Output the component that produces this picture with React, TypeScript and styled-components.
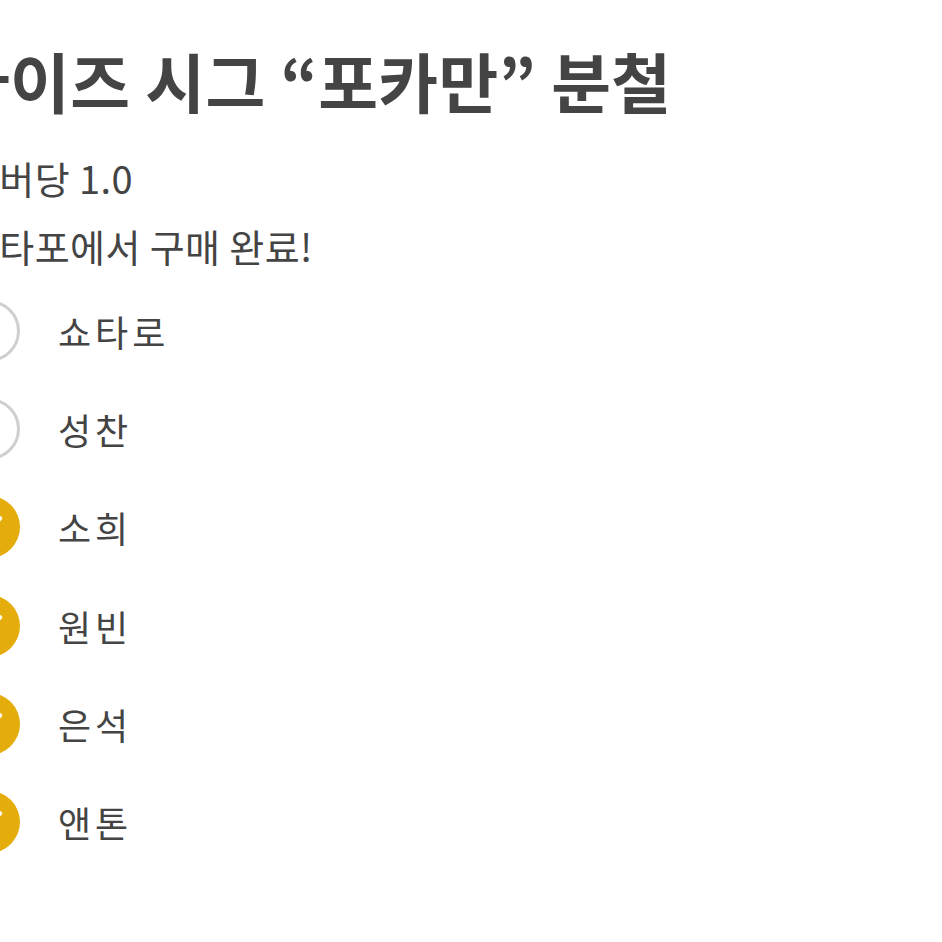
import React from 'react';
import styled, { createGlobalStyle } from 'styled-components';

const GlobalStyle = createGlobalStyle`
  html, body {
    margin: 0;
    padding: 0;
    background: #ffffff;
    overflow: hidden;
  }
  body {
    font-family: "Noto Sans CJK KR", "Noto Sans", sans-serif;
  }
`;

const Page = styled.div`
  width: 1000px;
  margin-left: -42px;
  padding-top: 40px;
`;

const Title = styled.h1`
  margin: 0 0 24px -8px;
  font-size: 65px;
  font-weight: 700;
  line-height: 80px;
  color: #444444;
  letter-spacing: 0.3px;
  white-space: nowrap;
`;

const Line = styled.p`
  margin: 0 0 0 6px;
  font-size: 38px;
  font-weight: 400;
  line-height: 68px;
  color: #444444;
  letter-spacing: 0.4px;
  white-space: nowrap;
`;

const List = styled.ul`
  list-style: none;
  margin: 2px 0 0;
  padding: 0;
`;

const Row = styled.li`
  display: flex;
  align-items: center;
  gap: 38px;
  height: 98.2px;
`;

const Circle = styled.span<{ $checked: boolean }>`
  flex: none;
  width: 62px;
  height: 62px;
  border-radius: 50%;
  box-sizing: border-box;
  display: flex;
  align-items: center;
  justify-content: center;
  background: ${(p) => (p.$checked ? '#e4ad0b' : 'transparent')};
  border: ${(p) => (p.$checked ? 'none' : '3px solid #cfcfcf')};
`;

const Label = styled.span`
  font-size: 36px;
  letter-spacing: 4px;
  color: #444444;
`;

const members = [
  { name: '쇼타로', checked: false },
  { name: '성찬', checked: false },
  { name: '소희', checked: true },
  { name: '원빈', checked: true },
  { name: '은석', checked: true },
  { name: '앤톤', checked: true },
];

const Check = () => (
  <svg width="38" height="38" viewBox="0 0 24 24" fill="none" stroke="#ffffff" strokeWidth="2.6" strokeLinecap="round" strokeLinejoin="round">
    <path d="M5 12.5l4.5 4.5L19 6.5" />
  </svg>
);

export default function App() {
  return (
    <>
      <GlobalStyle />
      <Page>
        <Title>라이즈 시그 “포카만” 분철</Title>
        <Line>멤버당 1.0</Line>
        <Line>케타포에서 구매 완료!</Line>
        <List>
          {members.map((m) => (
            <Row key={m.name}>
              <Circle $checked={m.checked}>{m.checked && <Check />}</Circle>
              <Label>{m.name}</Label>
            </Row>
          ))}
        </List>
      </Page>
    </>
  );
}
